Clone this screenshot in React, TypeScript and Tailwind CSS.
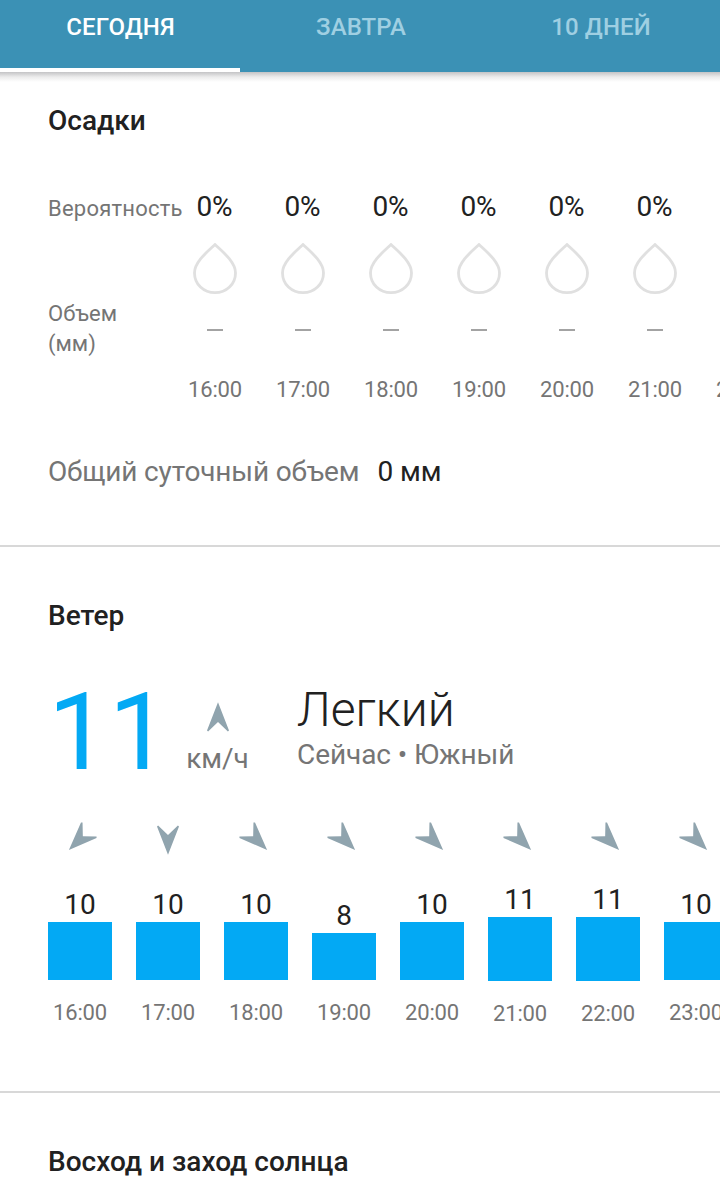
const rain = ["16:00", "17:00", "18:00", "19:00", "20:00", "21:00", "22:00"];

const wind = [
  { time: "16:00", speed: 10, height: 58, angle: 225 },
  { time: "17:00", speed: 10, height: 58, angle: 180 },
  { time: "18:00", speed: 10, height: 58, angle: 135 },
  { time: "19:00", speed: 8, height: 47, angle: 135 },
  { time: "20:00", speed: 10, height: 58, angle: 135 },
  { time: "21:00", speed: 11, height: 64, angle: 135 },
  { time: "22:00", speed: 11, height: 64, angle: 135 },
  { time: "23:00", speed: 10, height: 58, angle: 135 },
];

function Arrow({ angle }: { angle: number }) {
  return (
    <svg width="34" height="34" viewBox="-17 -17 34 34" className="block shrink-0">
      <path
        d="M0 -15.7L11 12.4L9.9 13.5L0 4L-9.9 13.5L-11 12.4Z"
        fill="#90a4ae"
        transform={`rotate(${angle})`}
      />
    </svg>
  );
}

function Drop() {
  return (
    <svg width="46" height="52" viewBox="0 0 46 52" className="block shrink-0">
      <path
        d="M23 1.6C17 7.4 2.5 18.5 2.5 29.9C2.5 41.2 11.6 49.6 23 49.6C34.4 49.6 43.5 41.2 43.5 29.9C43.5 18.5 29 7.4 23 1.6Z"
        fill="none"
        stroke="#e0e0e0"
        strokeWidth="2.8"
      />
    </svg>
  );
}

function Title({ children }: { children: string }) {
  return <h2 className="pl-12 text-[28px] leading-8 font-medium text-[#212121]">{children}</h2>;
}

function Tab({ label, active = false }: { label: string; active?: boolean }) {
  return (
    <div
      className={
        active
          ? "w-60 border-b-4 border-white pt-[13px] pl-px text-center tracking-[0.15px] text-white"
          : "w-60 pt-[13px] pl-[2px] text-center tracking-[0.1px] text-[#9fcfe2]"
      }
    >
      {label}
    </div>
  );
}

export default function App() {
  return (
    <div className="h-[1189px] w-[720px] overflow-hidden bg-white font-[Roboto,sans-serif] text-[#757575]">
      <header className="flex h-[72px] bg-[#3b91b5] text-[24px] leading-7 font-medium">
        <Tab label="СЕГОДНЯ" active />
        <Tab label="ЗАВТРА" />
        <Tab label="10 ДНЕЙ" />
      </header>
      <div className="h-[10px] bg-linear-to-b from-[#c4c4c6] via-[#ececec] to-white" />

      <section className="h-[463px] pt-[23px]">
        <Title>Осадки</Title>
        <div className="mt-[54px] flex pl-12">
          <div className="w-[123px] shrink-0 pt-[5px] text-[22px]">
            <div className="leading-[26px] tracking-[0.23px] whitespace-nowrap">Вероятность</div>
            <div className="mt-[77px] w-20 leading-[30px]">Объем (мм)</div>
          </div>
          {rain.map((time) => (
            <div key={time} className="flex w-[88px] shrink-0 flex-col items-center">
              <div className="h-8 pr-px text-[28px] leading-8 text-[#212121]">{time !== "22:00" && "0%"}</div>
              <div className="mt-[20px]">
                <Drop />
              </div>
              <div className="mt-[34px] h-[2px] w-4 bg-[#a3a3a3]" />
              <div className="mt-[46px] text-[22px] leading-[26px] tracking-[-0.2px]">{time}</div>
            </div>
          ))}
        </div>
        <div className="mt-[53px] flex pl-12 text-[28px] leading-8">
          <span className="tracking-[-0.15px]">Общий суточный объем</span>
          <span className="ml-[18px] text-[#212121]">0 мм</span>
        </div>
      </section>

      <section className="h-[546px] border-t-2 border-[#d8d8d8] pt-[53px]">
        <Title>Ветер</Title>
        <div className="mt-[46px] flex h-[108px] pl-12">
          <div className="w-[138px] text-[108px] leading-[108px] text-[#03a9f4]">11</div>
          <div className="flex w-[64px] flex-col items-center pt-[23px]">
            <Arrow angle={0} />
            <div className="mt-[8px] pr-px text-[28px] leading-8">км/ч</div>
          </div>
          <div className="ml-[47px] pt-[4px]">
            <div className="text-[48px] leading-[56px] font-light text-[#212121]">Легкий</div>
            <div className="mt-px text-[28px] leading-8 tracking-[-0.07px]">Сейчас • Южный</div>
          </div>
        </div>
        <div className="mt-[36px] flex gap-6 pl-12">
          {wind.map((hour) => (
            <div key={hour.time} className="flex w-16 shrink-0 flex-col items-center">
              <Arrow angle={hour.angle} />
              <div className="flex h-[125px] flex-col justify-end">
                <div className="text-center text-[28px] leading-8 text-[#212121]">{hour.speed}</div>
                <div className="mt-px w-16 shrink-0 bg-[#03a9f4]" style={{ height: hour.height }} />
                {hour.speed !== 11 && <div className="h-px" />}
              </div>
              <div
                className={
                  hour.speed === 11
                    ? "mt-[20px] text-[22px] leading-[26px] tracking-[-0.2px]"
                    : "mt-[19px] text-[22px] leading-[26px] tracking-[-0.2px]"
                }
              >
                {hour.time}
              </div>
            </div>
          ))}
        </div>
      </section>

      <section className="border-t-2 border-[#d8d8d8] pt-[53px]">
        <Title>Восход и заход солнца</Title>
      </section>
    </div>
  );
}
